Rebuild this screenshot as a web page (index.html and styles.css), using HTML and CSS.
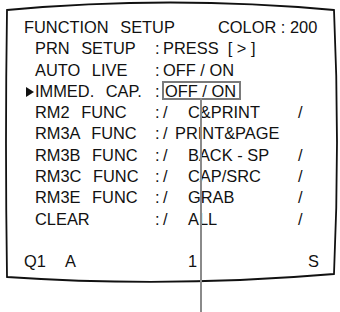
FILE: index.html
```html
<!DOCTYPE html>
<html>
<head>
  <meta charset="utf-8">
  <title>Function Setup</title>
  <link rel="stylesheet" href="styles.css">
</head>
<body>
  <div class="screen">
    <svg class="frame" width="340" height="312" viewBox="0 0 340 312">
      <path d="M7 10 Q170 -5 334 10 Q340 142 334 274 Q170 288 7 277 Q5 143 7 10 Z" />
    </svg>

    <div class="row head">
      <span class="title">FUNCTION SETUP</span>
      <span class="color">COLOR : 200</span>
    </div>
    <div class="row item">
      <span class="label">PRN SETUP</span><span class="colon">:</span><span>PRESS&nbsp; [ &gt; ]</span>
    </div>
    <div class="row item">
      <span class="label">AUTO LIVE</span><span class="colon">:</span><span>OFF / ON</span>
    </div>
    <div class="row item current">
      <span class="label"><svg class="marker" width="8" height="10" viewBox="0 0 8 10"><path d="M0 0 L8 5 L0 10 Z" /></svg>IMMED. CAP.</span><span class="colon">:</span><span class="picked">OFF / ON</span>
    </div>
    <div class="row item">
      <span class="label">RM2 FUNC</span><span class="colon">:</span><span class="slash">/</span><span class="value">C&amp;PRINT</span><span>/</span>
    </div>
    <div class="row item">
      <span class="label">RM3A FUNC</span><span class="colon">:</span><span class="slash short">/</span><span>PRINT&amp;PAGE</span>
    </div>
    <div class="row item">
      <span class="label">RM3B FUNC</span><span class="colon">:</span><span class="slash">/</span><span class="value">BACK - SP</span><span>/</span>
    </div>
    <div class="row item">
      <span class="label">RM3C FUNC</span><span class="colon">:</span><span class="slash">/</span><span class="value">CAP/SRC</span><span>/</span>
    </div>
    <div class="row item">
      <span class="label">RM3E FUNC</span><span class="colon">:</span><span class="slash">/</span><span class="value">GRAB</span><span>/</span>
    </div>
    <div class="row item">
      <span class="label">CLEAR</span><span class="colon">:</span><span class="slash">/</span><span class="value">ALL</span><span>/</span>
    </div>
    <div class="row blank"></div>
    <div class="row foot">
      <span class="q">Q1</span><span class="mode">A</span><span class="page">1</span><span>S</span>
    </div>
  </div>
</body>
</html>
```

FILE: styles.css
```css
body {
  margin: 0;
  background: #fff;
}

.screen {
  position: relative;
  width: 340px;
  height: 312px;
  box-sizing: border-box;
  padding: 17px 0 0 24px;
  font-family: "Liberation Sans", Arial, sans-serif;
  font-size: 16.4px;
  color: #111;
  overflow: hidden;
}

.frame {
  position: absolute;
  left: 0;
  top: 0;
  pointer-events: none;
}

.frame path {
  fill: none;
  stroke: #111;
  stroke-width: 1.8;
}

.row {
  display: flex;
  height: 21.3px;
  line-height: 21.3px;
  white-space: pre;
}

.head .title {
  width: 194px;
  word-spacing: 7px;
}

.item {
  padding-left: 11px;
}

.label {
  position: relative;
  width: 120px;
  word-spacing: 7px;
}

.marker {
  position: absolute;
  left: -9px;
  top: 6px;
}

.marker path {
  fill: #111;
}

.colon {
  width: 8px;
}

.slash {
  width: 25px;
}

.slash.short {
  width: 12px;
}

.value {
  width: 110px;
}

.picked {
  position: relative;
  align-self: center;
  margin-top: -3px;
  margin-left: -1px;
  padding: 1px 3px 0 1px;
  line-height: 14px;
  border: 2px solid #7a7a7a;
}

/* pointer line running down from the selected value */
.picked::after {
  content: '';
  position: absolute;
  left: 36px;
  top: 100%;
  width: 2px;
  height: 230px;
  background: #8a8a8a;
}

.foot .q {
  width: 41px;
}

.foot .mode {
  width: 123px;
}

.foot .page {
  width: 120px;
}
```
